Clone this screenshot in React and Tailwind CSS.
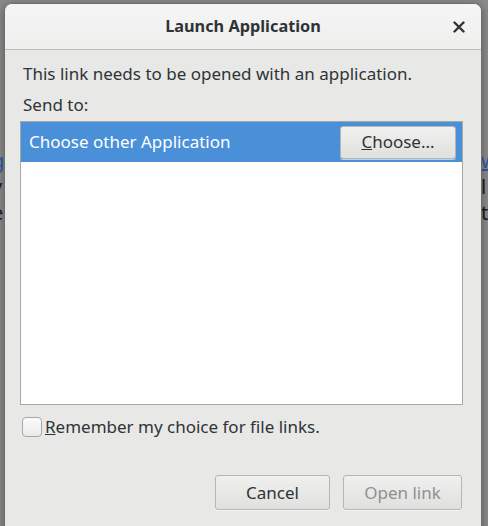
import React, { useState } from "react";

const font = { fontFamily: '"Noto Sans", "Open Sans", sans-serif' };

function GtkButton({ children, disabled = false, className = "" }) {
    return (
        <button
            disabled={disabled}
            className={
                "flex items-center justify-center rounded-[3px] border border-[#b6b6b3] bg-gradient-to-b from-[#f0f0ef] to-[#e0e0de] text-[17px] shadow-[0_1px_0_rgba(255,255,255,0.6)] " +
                (disabled ? "text-[#8e9192]" : "text-[#2e3436]") +
                " " +
                className
            }
        >
            {children}
        </button>
    );
}

export default function App() {
    const [remember, setRemember] = useState(false);

    return (
        <div
            className="relative w-[488px] h-[526px] overflow-hidden bg-[#8a8a8a]"
            style={font}
        >
            {/* page behind the dialog */}
            <div className="absolute left-[-8px] top-[148px] flex flex-col text-[20px] leading-[26px] text-[#1d1d1d]">
                <span className="text-[#2f5a9e] underline">g</span>
                <span>y</span>
                <span>e</span>
            </div>
            <div className="absolute left-[481px] top-[148px] flex flex-col text-[20px] leading-[26px] text-[#1d1d1d]">
                <span className="text-[#2f5a9e] underline">w</span>
                <span>l</span>
                <span>t</span>
            </div>

            {/* dialog */}
            <div className="relative ml-[4px] mt-[3px] w-[478px] h-[540px] flex flex-col rounded-t-[8px] border border-[#6f6f6f] bg-[#e8e8e7] shadow-[0_2px_10px_rgba(0,0,0,0.35)]">
                <div className="relative h-[46px] shrink-0 flex items-center justify-center rounded-t-[7px] border-b border-[#bdbdbb] bg-gradient-to-b from-[#f5f5f5] to-[#efefee]">
                    <span className="text-[16.3px] font-bold text-[#2e3436]">
                        Launch Application
                    </span>
                    <button className="absolute right-[16px] top-[17px] w-[12px] h-[12px] flex items-center justify-center">
                        <svg width="12" height="12" viewBox="0 0 12 12">
                            <path
                                d="M1.5 1.5 L10.5 10.5 M10.5 1.5 L1.5 10.5"
                                stroke="#2e3436"
                                strokeWidth="2.4"
                                strokeLinecap="round"
                            />
                        </svg>
                    </button>
                </div>

                <div className="flex flex-col px-[15px] text-[17px] text-[#2e3436]">
                    <p className="mt-[13px] pl-[3px] leading-[22px]">
                        This link needs to be opened with an application.
                    </p>
                    <p className="mt-[9px] pl-[3px] leading-[22px]">Send to:</p>

                    <div className="mt-[5px] w-[443px] h-[284px] border border-[#a7a8a6] bg-white">
                        <div className="h-[40px] flex items-center justify-between bg-[#4a90d9] pl-[8px] pr-[6px]">
                            <span className="text-white">Choose other Application</span>
                            <GtkButton className="w-[116px] h-[33px]">
                                <u>C</u>hoose...
                            </GtkButton>
                        </div>
                    </div>

                    <label className="mt-[11px] ml-[2px] flex items-center gap-[3px] cursor-pointer">
                        <span
                            onClick={() => setRemember(!remember)}
                            className="w-[20px] h-[20px] rounded-[4px] border border-[#a8a9a6] bg-gradient-to-b from-[#fbfbfb] to-[#ebebea] flex items-center justify-center"
                        >
                            {remember && <span className="text-[12px]">✓</span>}
                        </span>
                        <span className="leading-[22px]">
                            <u>R</u>emember my choice for file links.
                        </span>
                    </label>

                    <div className="mt-[37px] flex justify-end gap-[13px] pr-[4px]">
                        <GtkButton className="w-[115px] h-[35px]">Cancel</GtkButton>
                        <GtkButton disabled className="w-[119px] h-[35px]">
                            Open link
                        </GtkButton>
                    </div>
                </div>
            </div>
        </div>
    );
}
